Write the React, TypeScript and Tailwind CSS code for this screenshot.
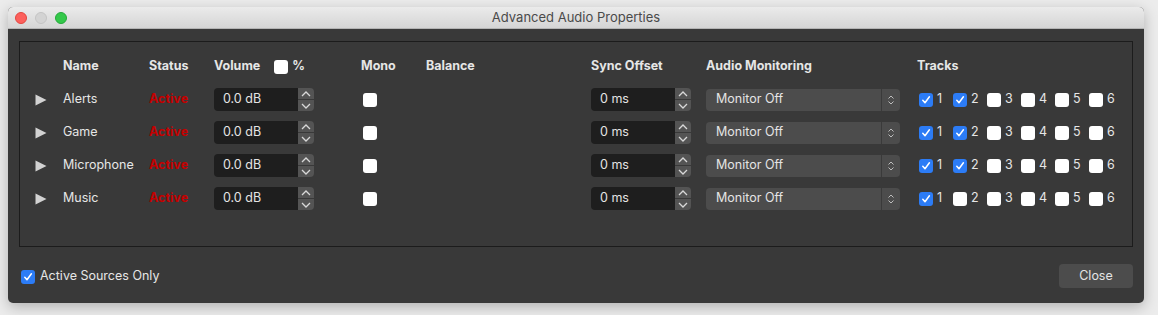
import React from "react";

const sources = [
  { name: "Alerts", tracks: [1, 2] },
  { name: "Game", tracks: [1, 2] },
  { name: "Microphone", tracks: [1, 2] },
  { name: "Music", tracks: [1] },
];

const cols =
  "grid grid-cols-[28px_86px_65px_147px_65px_165px_115px_211px_1fr] items-center pl-[15px]";

function Check({ checked = false }: { checked?: boolean }) {
  if (checked) {
    return (
      <span className="flex h-[14px] w-[14px] shrink-0 items-center justify-center rounded-[3px] bg-[#2c7cf6]">
        <svg width="10" height="10" viewBox="0 0 10 10">
          <path
            d="M1.8 5.3 L4 7.8 L8.4 1.8"
            fill="none"
            stroke="white"
            strokeWidth="1.5"
            strokeLinecap="round"
            strokeLinejoin="round"
          />
        </svg>
      </span>
    );
  }
  return <span className="block h-[14px] w-[14px] shrink-0 rounded-[3px] bg-white" />;
}

function Spin({ value }: { value: string }) {
  return (
    <div className="flex h-[23px] items-stretch">
      <div className="flex w-[84px] items-center rounded-l-[4px] bg-[#1e1e1e] pl-[9px] text-[#e4e4e4]">
        {value}
      </div>
      <div className="flex w-[16px] flex-col gap-px">
        <div className="flex flex-1 items-center justify-center rounded-tr-[4px] bg-[#545454]">
          <svg width="10" height="6" viewBox="0 0 10 6">
            <path d="M1 5 L5 1 L9 5" fill="none" stroke="#d8d8d8" strokeWidth="1.3" />
          </svg>
        </div>
        <div className="flex flex-1 items-center justify-center rounded-br-[4px] bg-[#545454]">
          <svg width="10" height="6" viewBox="0 0 10 6">
            <path d="M1 1 L5 5 L9 1" fill="none" stroke="#d8d8d8" strokeWidth="1.3" />
          </svg>
        </div>
      </div>
    </div>
  );
}

function Dropdown() {
  return (
    <div className="flex h-[22px] w-[194px] items-stretch rounded-[4px] bg-[#4c4c4c]">
      <div className="flex flex-1 items-center pl-[10px] text-[#e4e4e4]">Monitor Off</div>
      <div className="w-px bg-[#3a3a3a]" />
      <div className="flex w-[18px] items-center justify-center">
        <svg width="8" height="12" viewBox="0 0 8 12">
          <path d="M1.5 4.5 L4 2 L6.5 4.5 M1.5 7.5 L4 10 L6.5 7.5" fill="none" stroke="#bdbdbd" strokeWidth="1" />
        </svg>
      </div>
    </div>
  );
}

function Triangle() {
  return (
    <svg width="12" height="12" viewBox="0 0 12 12">
      <path d="M0.5 0.5 L11.5 6 L0.5 11.5 Z" fill="#d2d2d2" />
    </svg>
  );
}

export default function App() {
  return (
    <div
      className="h-[315px] w-[1158px] overflow-hidden bg-[#ececec] pl-[8px] pt-[7px] text-[12.5px]"
      style={{ fontFamily: "Inter, 'Liberation Sans', sans-serif" }}
    >
      <div className="flex h-[296px] w-[1136px] flex-col overflow-hidden rounded-[5px] bg-[#393939] shadow-[0_4px_14px_rgba(0,0,0,0.25)]">
        {/* title bar */}
        <div className="relative flex h-[22px] shrink-0 items-center justify-center border-b border-[#b4b4b4] bg-gradient-to-b from-[#ebebeb] to-[#d5d5d5]">
          <div className="absolute left-[7px] top-[5px] flex gap-[8px]">
            <span className="h-[12px] w-[12px] rounded-full border border-[#e2463f] bg-[#fc605c]" />
            <span className="h-[12px] w-[12px] rounded-full border border-[#c4c4c4] bg-[#d3d3d3]" />
            <span className="h-[12px] w-[12px] rounded-full border border-[#24a93a] bg-[#34c84a]" />
          </div>
          <span className="text-[13px] text-[#4a4a4a]">Advanced Audio Properties</span>
        </div>

        <div className="flex flex-1 flex-col px-[11px] pt-[12px]">
          {/* panel */}
          <div className="h-[206px] border border-[#1c1c1c] pt-[8px] text-[#e6e6e6]">
            <div className={`${cols} h-[33px] font-bold`}>
              <span />
              <span>Name</span>
              <span>Status</span>
              <div className="flex items-center">
                <span>Volume</span>
                <span className="ml-[14px]">
                  <Check />
                </span>
                <span className="ml-[4px]">%</span>
              </div>
              <span>Mono</span>
              <span>Balance</span>
              <span>Sync Offset</span>
              <span>Audio Monitoring</span>
              <span>Tracks</span>
            </div>
            {sources.map((s) => (
              <div key={s.name} className={`${cols} h-[33px]`}>
                <Triangle />
                <span>{s.name}</span>
                <span className="font-bold text-[#c40000]">Active</span>
                <Spin value="0.0 dB" />
                <span className="ml-[2px]">
                  <Check />
                </span>
                <span />
                <Spin value="0 ms" />
                <Dropdown />
                <div className="ml-[2px] flex">
                  {[1, 2, 3, 4, 5, 6].map((t) => (
                    <div key={t} className="flex w-[34px] items-center gap-[4px]">
                      <Check checked={s.tracks.includes(t)} />
                      <span>{t}</span>
                    </div>
                  ))}
                </div>
              </div>
            ))}
          </div>

          {/* footer */}
          <div className="mt-[17px] flex h-[24px] items-center justify-between">
            <div className="ml-[2px] flex items-center gap-[5px] pt-px text-[#e6e6e6]">
              <Check checked />
              <span>Active Sources Only</span>
            </div>
            <button className="h-[24px] w-[74px] rounded-[4px] bg-[#4c4c4c] text-[#e4e4e4]">
              Close
            </button>
          </div>
        </div>
      </div>
    </div>
  );
}
